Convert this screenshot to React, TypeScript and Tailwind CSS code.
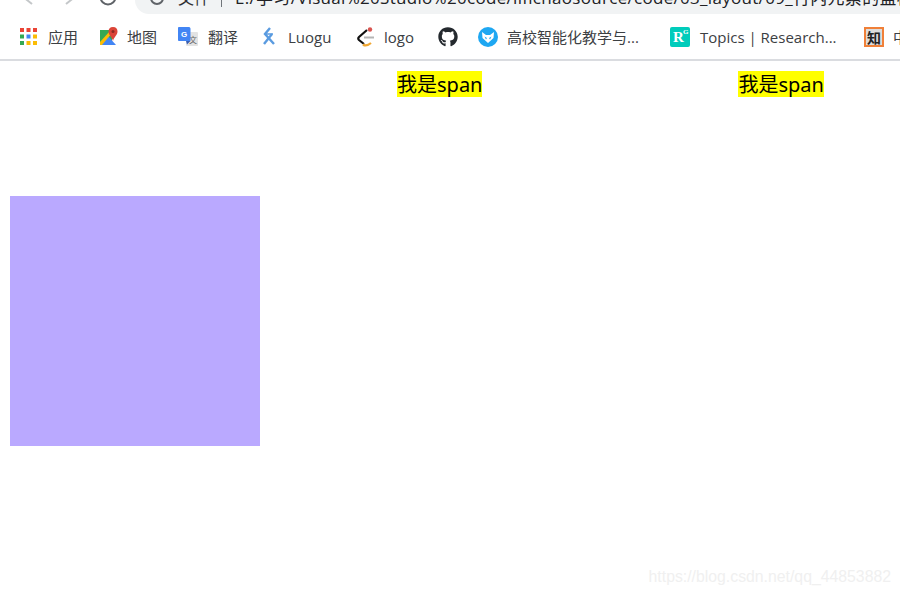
import { FaGithub } from "react-icons/fa";

const bookmarkFont = "pt-[2px] font-['Open_Sans','Noto_Sans_CJK_SC',sans-serif] text-[15px] text-[#3c4043] whitespace-nowrap";

function AppsIcon() {
  const c = ["#ea4335", "#ea4335", "#ea4335", "#34a853", "#4285f4", "#fbbc05", "#34a853", "#fbbc05", "#fbbc05"];
  return (
    <svg width="17" height="17" viewBox="0 0 17 17">
      {c.map((f, i) => (
        <rect key={i} x={(i % 3) * 6.500} y={Math.floor(i / 3) * 6.500} width="4" height="4" fill={f} />
      ))}
    </svg>
  );
}

function MapsIcon() {
  return (
    <svg width="20" height="20" viewBox="0 0 20 20">
      <path d="M1 3 L13 3 L13 18 L1 18 Z" fill="#34a853" />
      <path d="M1 18 L9 9 L17 18 Z" fill="#4285f4" />
      <path d="M1 15 L11 4 L13 6 L3 18 L1 18 Z" fill="#fbbc05" />
      <path d="M14 0 C11 0 9.500 2 9.500 4.500 C9.500 8 13 10 14 14 C15 10 18.500 8 18.500 4.500 C18.500 2 17 0 14 0 Z" fill="#db4437" />
      <circle cx="14" cy="4.500" r="1.500" fill="#8e2a20" />
    </svg>
  );
}

function TranslateIcon() {
  return (
    <svg width="20" height="20" viewBox="0 0 20 20">
      <rect x="8" y="5" width="12" height="14" rx="1" fill="#e3e3e3" />
      <text x="11" y="16" fontSize="8" fill="#666" fontFamily="Noto Sans CJK SC">文</text>
      <path d="M1 0 H11 C12 0 12.500 1 12.500 2 V14 H1 C0.500 14 0 13.500 0 13 V1 C0 0.500 0.500 0 1 0 Z" fill="#4285f4" />
      <path d="M9 17.500 L12.500 14 H8 Z" fill="#3a5fb0" />
      <text x="3" y="10" fontSize="8" fontWeight="700" fill="#fff" fontFamily="Liberation Sans">G</text>
    </svg>
  );
}

function LuoguIcon() {
  return (
    <svg className="mt-[1px] ml-[1px]" width="16" height="20" viewBox="0 0 16 20" fill="none" stroke="#5a9be0" strokeWidth="2.400">
      <path d="M9 1 L4 7 L13 17" />
      <path d="M11 7 L3 17" />
      <path d="M4 7 H12" strokeWidth="1.500" />
    </svg>
  );
}

function LogoIcon() {
  return (
    <svg width="20" height="20" viewBox="0 0 20 20" fill="none">
      <path d="M11 3 L3 10 C2 11 2 12 3 13 L8 17" stroke="#111" strokeWidth="2.200" />
      <path d="M7 17.500 C9 19 12 18.500 15 16" stroke="#f0a732" strokeWidth="2.200" />
      <path d="M8 10.500 H18" stroke="#b5b5b5" strokeWidth="2" />
      <circle cx="14" cy="2.500" r="2.200" fill="#d9544f" />
    </svg>
  );
}

function FoxIcon() {
  return (
    <svg width="20" height="20" viewBox="0 0 20 20">
      <circle cx="10" cy="10" r="10" fill="#1ea7f2" />
      <path d="M4 5 L8 8 H12 L16 5 L15.500 11 L10 16 L4.500 11 Z" fill="#fff" />
      <path d="M6.500 9.500 L9 11 L8 12.500 Z M13.500 9.500 L11 11 L12 12.500 Z" fill="#1ea7f2" />
    </svg>
  );
}

function RGIcon() {
  return (
    <div className="relative w-[20px] h-[20px] rounded-[2px] bg-[#00ccbb] text-white font-['Liberation_Serif',serif]">
      <span className="absolute left-[3px] top-[3px] text-[15px] leading-[15px] font-bold">R</span>
      <span className="absolute left-[13px] top-[1px] text-[7px] leading-[8px] font-bold">G</span>
    </div>
  );
}

function ZhiIcon() {
  return (
    <div className="w-[20px] h-[20px] border-2 border-[#f08038] bg-[#dcdcdc] flex items-center justify-center overflow-hidden text-[14px] leading-none font-bold text-[#222] font-['Noto_Sans_CJK_SC',sans-serif]">
      知
    </div>
  );
}

const items = [
  { icon: <AppsIcon />, label: "应用", w: "w-[79px]", iw: "w-[28px]" },
  { icon: <MapsIcon />, label: "地图", w: "w-[79px]", iw: "w-[28px]" },
  { icon: <TranslateIcon />, label: "翻译", w: "w-[82px]", iw: "w-[30px]" },
  { icon: <LuoguIcon />, label: "Luogu", w: "w-[96px]", iw: "w-[28px]" },
];

export default function App() {
  return (
    <div className="relative w-[900px] h-[595px] overflow-hidden bg-white">
      {/* browser toolbar, cropped at the top */}
      <div className="flex h-[14px] overflow-hidden bg-white">
        <div className="flex w-[135px] shrink-0 items-start text-[#80868b]">
          <svg className="ml-[20px]" width="14" height="6" viewBox="0 0 14 6" fill="none" stroke="#c4c7c9" strokeWidth="2">
            <path d="M2 -4 L7 0 L12 4" />
          </svg>
          <svg className="ml-[30px]" width="14" height="6" viewBox="0 0 14 6" fill="none" stroke="#c4c7c9" strokeWidth="2">
            <path d="M12 -4 L7 0 L2 4" />
          </svg>
          <svg className="ml-[21px]" width="18" height="6" viewBox="0 0 18 6" fill="none" stroke="#5f6368" strokeWidth="2">
            <path d="M1.500 -3 A7.500 7.500 0 0 0 16.500 -3" />
          </svg>
        </div>
        <div className="flex flex-1 items-start rounded-bl-[14px] bg-[#f1f3f4] overflow-hidden whitespace-nowrap">
          <svg className="ml-[14px] shrink-0" width="16" height="6" viewBox="0 0 16 6" fill="none" stroke="#5f6368" strokeWidth="2">
            <circle cx="8" cy="-2" r="6" />
          </svg>
          <div className="ml-[13px] -mt-[13px] text-[16px] leading-[22px] text-[#303134] font-['Open_Sans','Noto_Sans_CJK_SC',sans-serif]">
            文件
          </div>
          <div className="ml-[11px] w-[1px] h-[7px] bg-[#70757a] shrink-0" />
          <div className="ml-[13px] -mt-[13px] text-[17px] tracking-[0.3px] leading-[22px] text-[#202124] font-['Open_Sans','Noto_Sans_CJK_SC',sans-serif]">
            E:/学习/Visual%20Studio%20code/lifichaosource/code/03_layout/09_行内元素的盒模型.html
          </div>
        </div>
      </div>

      {/* bookmarks bar */}
      <div className="flex h-[45px] items-center pl-[20px] bg-white">
        {items.map((it) => (
          <div key={it.label} className={`flex items-center shrink-0 ${it.w}`}>
            <div className={`${it.iw} shrink-0 flex`}>{it.icon}</div>
            <span className={bookmarkFont}>{it.label}</span>
          </div>
        ))}
        <div className="flex items-center shrink-0 w-[82px]">
          <div className="w-[28px] shrink-0 flex">
            <LogoIcon />
          </div>
          <span className={bookmarkFont}>logo</span>
        </div>
        <div className="shrink-0 w-[40px] flex">
          <FaGithub size={20} color="#24292e" />
        </div>
        <div className="flex items-center shrink-0 w-[192px]">
          <div className="w-[29px] shrink-0 flex">
            <FoxIcon />
          </div>
          <span className={bookmarkFont}>高校智能化教学与...</span>
        </div>
        <div className="flex items-center shrink-0 w-[194px]">
          <div className="w-[30px] shrink-0 flex">
            <RGIcon />
          </div>
          <span className={bookmarkFont}>Topics | Research...</span>
        </div>
        <div className="flex items-center shrink-0">
          <div className="w-[29px] shrink-0 flex">
            <ZhiIcon />
          </div>
          <span className={bookmarkFont}>中文</span>
        </div>
      </div>
      <div className="h-[2px] bg-[#dadce0]" />

      {/* page */}
      <div className="flex gap-[256px] pl-[397px] pt-[10px]">
        <span className="bg-[#ffff00] text-black text-[20px] pt-[1px] leading-[25px] font-['Noto_Sans','Noto_Sans_CJK_SC',sans-serif] whitespace-nowrap">我是span</span>
        <span className="bg-[#ffff00] text-black text-[20px] pt-[1px] leading-[25px] font-['Noto_Sans','Noto_Sans_CJK_SC',sans-serif] whitespace-nowrap">我是span</span>
      </div>
      <div className="ml-[10px] mt-[99px] w-[250px] h-[250px] bg-[#baa9ff]" />

      {/* watermark */}
      <div className="absolute right-[9px] top-[567px] text-[15.8px] leading-[20px] text-[#f0f0f0] font-['Liberation_Sans',sans-serif] whitespace-nowrap">
        https://blog.csdn.net/qq_44853882
      </div>
    </div>
  );
}
